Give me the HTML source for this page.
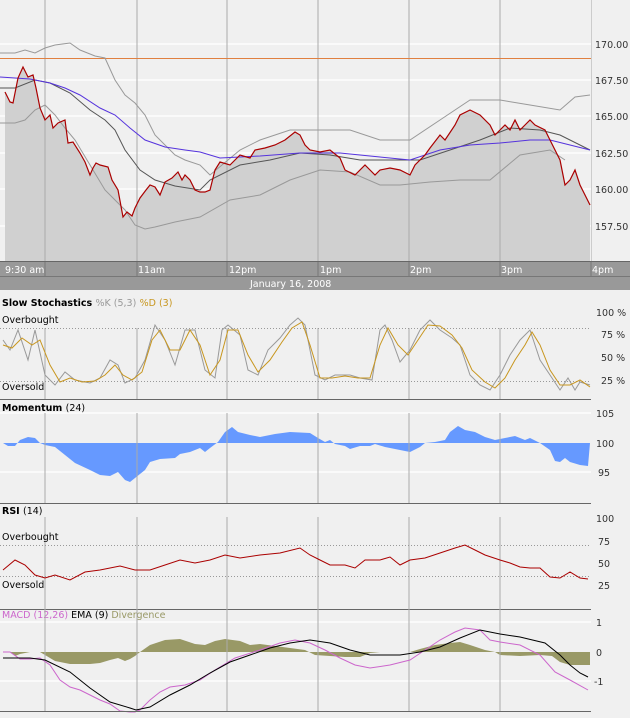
<!DOCTYPE html>
<html><head><style>
body{margin:0;background:#f0f0f0;width:630px;height:718px;overflow:hidden}
svg{display:block}
text{font-family:"DejaVu Sans","Liberation Sans",sans-serif;font-size:9.5px}
</style></head><body>
<svg width="630" height="718" viewBox="0 0 630 718">
<rect x="0" y="0" width="630" height="718" fill="#f0f0f0"/>
<g stroke="#fff" stroke-width="1.2">
<line x1="0" y1="44" x2="591" y2="44"/><line x1="0" y1="80" x2="591" y2="80"/><line x1="0" y1="116" x2="591" y2="116"/><line x1="0" y1="153" x2="591" y2="153"/><line x1="0" y1="189" x2="591" y2="189"/><line x1="0" y1="226" x2="591" y2="226"/>
</g>
<polygon fill="#d0d0d0" points="5,261 5,92 10,102 13,103 18,78 23,67 28,77 33,75 36,88 40,108 45,120 50,115 53,128 58,123 65,120 68,143 73,142 80,153 85,162 90,175 93,168 96,163 100,165 108,167 112,180 118,190 123,217 127,212 132,216 135,208 140,198 146,190 150,185 155,187 160,195 165,182 172,178 178,172 182,180 185,175 190,180 195,190 200,192 205,192 210,190 215,170 220,162 230,165 240,155 250,158 255,150 265,148 275,145 285,140 295,132 300,135 305,145 310,150 320,152 330,150 340,158 345,170 355,175 365,165 370,170 375,175 380,170 390,168 400,170 410,175 415,165 425,155 430,148 440,135 445,140 455,125 460,115 470,110 480,115 490,125 495,135 500,130 505,125 510,130 515,120 520,130 525,125 530,120 535,125 545,130 550,140 555,150 560,160 565,185 570,180 575,170 580,185 585,195 590,205 590,261"/>
<g stroke="#aaa" stroke-width="1">
<line x1="45" y1="0" x2="45" y2="261"/><line x1="137" y1="0" x2="137" y2="261"/><line x1="227" y1="0" x2="227" y2="261"/><line x1="318" y1="0" x2="318" y2="261"/><line x1="409" y1="0" x2="409" y2="261"/><line x1="500" y1="0" x2="500" y2="261"/><line x1="591.5" y1="0" x2="591.5" y2="261" stroke="#ccc"/>
</g>
<line x1="0" y1="58.5" x2="591" y2="58.5" stroke="#e08040" stroke-width="1"/>
<polyline fill="none" stroke="#999" points="0,53 15,53 25,50 35,53 45,48 55,45 70,43 80,50 95,56 105,58 115,80 125,95 135,103 145,115 155,135 165,145 175,155 185,160 200,165 210,175 240,150 260,140 290,130 320,130 350,130 380,140 410,140 440,120 470,100 500,100 530,105 560,110 575,97 590,95"/>
<polyline fill="none" stroke="#999" points="0,123 15,123 25,120 35,110 45,105 55,115 65,128 75,140 90,165 105,190 115,200 125,210 135,225 145,229 155,227 175,222 200,217 230,200 260,195 290,180 320,170 350,172 380,185 400,185 430,182 460,180 490,180 520,155 550,150 565,160"/>
<polyline fill="none" stroke="#555" points="0,88 15,88 35,80 50,83 70,93 90,110 105,120 115,130 125,150 140,170 155,180 175,186 200,190 210,180 240,165 270,160 300,153 330,155 360,160 390,160 420,160 450,150 480,140 510,128 540,130 560,135 590,150"/>
<polyline fill="none" stroke="#5533dd" points="0,77 30,79 50,83 65,88 80,95 100,108 115,115 130,128 145,140 165,147 185,150 200,152 220,158 260,156 300,153 340,153 380,157 410,160 440,150 470,145 500,143 530,140 550,140 570,145 590,150"/>
<polyline fill="none" stroke="#aa0000" stroke-width="1.2" points="5,92 10,102 13,103 18,78 23,67 28,77 33,75 36,88 40,108 45,120 50,115 53,128 58,123 65,120 68,143 73,142 80,153 85,162 90,175 93,168 96,163 100,165 108,167 112,180 118,190 123,217 127,212 132,216 135,208 140,198 146,190 150,185 155,187 160,195 165,182 172,178 178,172 182,180 185,175 190,180 195,190 200,192 205,192 210,190 215,170 220,162 230,165 240,155 250,158 255,150 265,148 275,145 285,140 295,132 300,135 305,145 310,150 320,152 330,150 340,158 345,170 355,175 365,165 370,170 375,175 380,170 390,168 400,170 410,175 415,165 425,155 430,148 440,135 445,140 455,125 460,115 470,110 480,115 490,125 495,135 500,130 505,125 510,130 515,120 520,130 525,125 530,120 535,125 545,130 550,140 555,150 560,160 565,185 570,180 575,170 580,185 585,195 590,205"/>
<g fill="#333"><text x="595" y="48">170.00</text><text x="595" y="84">167.50</text><text x="595" y="120">165.00</text><text x="595" y="157">162.50</text><text x="595" y="193">160.00</text><text x="595" y="230">157.50</text></g>
<!-- time bar -->
<rect x="0" y="261" width="630" height="29" fill="#999"/>
<line x1="0" y1="261.5" x2="630" y2="261.5" stroke="#666"/>
<line x1="0" y1="276.5" x2="630" y2="276.5" stroke="#777"/>
<g stroke="#777"><line x1="45" y1="262" x2="45" y2="276"/><line x1="137" y1="262" x2="137" y2="276"/><line x1="227" y1="262" x2="227" y2="276"/><line x1="318" y1="262" x2="318" y2="276"/><line x1="409" y1="262" x2="409" y2="276"/><line x1="500" y1="262" x2="500" y2="276"/><line x1="591" y1="262" x2="591" y2="276"/></g>
<g fill="#fff"><text x="5" y="273">9:30 am</text><text x="138" y="273">11am</text><text x="229" y="273">12pm</text><text x="320" y="273">1pm</text><text x="410" y="273">2pm</text><text x="501" y="273">3pm</text><text x="592" y="273">4pm</text><text x="250" y="287">January 16, 2008</text></g>
<!-- stochastics -->
<text x="2" y="306" font-weight="bold" fill="#000">Slow Stochastics <tspan font-weight="normal" fill="#999">%K (5,3)</tspan> <tspan font-weight="normal" fill="#c8961e">%D (3)</tspan></text>
<g stroke="#aaa"><line x1="45" y1="328" x2="45" y2="399"/><line x1="137" y1="328" x2="137" y2="399"/><line x1="227" y1="328" x2="227" y2="399"/><line x1="318" y1="328" x2="318" y2="399"/><line x1="409" y1="328" x2="409" y2="399"/><line x1="500" y1="328" x2="500" y2="399"/></g>
<g stroke="#999" stroke-dasharray="1,2"><line x1="0" y1="328.5" x2="591" y2="328.5"/><line x1="0" y1="381.5" x2="591" y2="381.5"/></g>
<text x="2" y="323" fill="#000">Overbought</text><text x="2" y="390" fill="#000">Oversold</text>
<polyline fill="none" stroke="#999" points="3,340 10,350 18,330 28,360 35,330 45,375 55,385 65,372 75,380 90,383 100,378 110,360 118,365 125,383 135,378 145,360 155,325 165,340 175,365 185,330 195,330 205,370 215,378 222,330 228,325 240,335 248,370 258,375 268,350 280,338 290,325 298,318 305,325 315,375 325,380 335,375 350,375 360,378 372,380 380,330 385,325 392,340 400,362 410,350 420,330 430,320 440,330 452,338 460,345 470,375 480,385 490,390 500,375 510,355 520,340 530,330 540,360 550,375 560,390 568,378 575,390 580,382 590,385"/>
<polyline fill="none" stroke="#c8961e" points="3,345 12,348 22,338 32,345 40,340 50,365 60,382 70,378 82,382 95,381 105,375 115,365 123,375 132,380 142,372 152,340 160,330 170,350 180,350 190,330 200,345 210,375 220,360 228,330 238,330 248,355 258,372 270,360 282,342 292,328 302,322 310,345 320,378 332,378 345,376 358,378 370,378 380,345 388,328 398,345 408,355 418,340 428,325 440,326 452,335 462,348 472,370 485,382 495,388 505,378 515,360 525,345 532,332 540,345 550,370 560,385 570,385 580,380 590,387"/>
<g fill="#333"><text x="596" y="316">100 %</text><text x="601" y="338">75 %</text><text x="601" y="361">50 %</text><text x="601" y="384">25 %</text></g>
<line x1="0" y1="399.5" x2="591" y2="399.5" stroke="#666"/>
<!-- momentum -->
<text x="2" y="411" font-weight="bold" fill="#000">Momentum <tspan font-weight="normal">(24)</tspan></text>
<g stroke="#fff" stroke-width="1.2"><line x1="0" y1="413" x2="591" y2="413"/><line x1="0" y1="472" x2="591" y2="472"/></g>
<polygon fill="#6699ff" points="3,443 8,446 15,446 20,440 28,437 35,438 40,443 45,445 55,447 65,455 75,463 90,470 100,475 110,476 118,472 125,480 130,482 135,478 145,470 150,462 160,459 175,458 180,454 190,452 200,448 205,452 210,448 218,442 225,432 232,427 238,432 250,435 260,437 275,434 290,432 310,433 318,438 325,442 330,440 335,444 345,446 350,449 360,446 370,446 375,444 385,447 400,450 410,452 420,447 425,443 435,442 445,440 450,432 458,426 465,430 475,432 485,437 495,440 505,438 515,436 525,440 530,438 540,443 550,450 555,461 560,462 565,458 570,462 580,465 588,466 590,443"/>
<g stroke="#aaa"><line x1="45" y1="413" x2="45" y2="503"/><line x1="137" y1="413" x2="137" y2="503"/><line x1="227" y1="413" x2="227" y2="503"/><line x1="318" y1="413" x2="318" y2="503"/><line x1="409" y1="413" x2="409" y2="503"/><line x1="500" y1="413" x2="500" y2="503"/></g>
<g fill="#333"><text x="596" y="417">105</text><text x="596" y="447">100</text><text x="598" y="476">95</text></g>
<line x1="0" y1="503.5" x2="591" y2="503.5" stroke="#666"/>
<!-- RSI -->
<text x="2" y="514" font-weight="bold" fill="#000">RSI <tspan font-weight="normal">(14)</tspan></text>
<g stroke="#aaa"><line x1="45" y1="517" x2="45" y2="609"/><line x1="137" y1="517" x2="137" y2="609"/><line x1="227" y1="517" x2="227" y2="609"/><line x1="318" y1="517" x2="318" y2="609"/><line x1="409" y1="517" x2="409" y2="609"/><line x1="500" y1="517" x2="500" y2="609"/></g>
<g stroke="#999" stroke-dasharray="1,2"><line x1="0" y1="545.5" x2="591" y2="545.5"/><line x1="0" y1="576.5" x2="591" y2="576.5"/></g>
<text x="2" y="540" fill="#000">Overbought</text><text x="2" y="588" fill="#000">Oversold</text>
<polyline fill="none" stroke="#aa0000" points="3,570 15,560 25,565 35,575 45,578 55,575 70,580 85,572 100,570 120,566 135,570 150,570 165,565 180,560 195,563 210,560 225,555 240,558 260,555 280,553 300,548 310,555 320,560 330,565 345,565 355,568 365,560 380,560 390,557 400,565 410,560 425,558 440,553 455,548 465,545 475,550 485,555 500,560 510,563 520,567 530,568 540,568 550,577 560,578 570,572 580,578 588,579"/>
<g fill="#333"><text x="596" y="522">100</text><text x="598" y="545">75</text><text x="598" y="567">50</text><text x="598" y="589">25</text></g>
<line x1="0" y1="609.5" x2="591" y2="609.5" stroke="#666"/>
<!-- MACD -->
<text x="2" y="618" fill="#cc66cc">MACD (12,26) <tspan fill="#000">EMA (9)</tspan> <tspan fill="#999966">Divergence</tspan></text>
<g stroke="#fff" stroke-width="1.2"><line x1="0" y1="622" x2="591" y2="622"/><line x1="0" y1="681" x2="591" y2="681"/></g>
<polygon fill="#999966" points="3,652 10,652 15,656 20,654 30,652 40,652 45,655 55,661 70,664 90,664 100,663 110,660 118,658 125,661 130,659 135,656 140,652 150,645 165,640 180,639 195,644 205,645 215,641 225,639 240,641 250,645 260,644 275,646 290,648 305,650 315,655 330,656 345,657 360,657 370,653 380,652 410,652 420,649 435,645 450,643 460,642 470,645 485,650 495,652 500,655 520,656 540,655 552,656 560,662 570,665 590,665 590,652"/>
<g stroke="#aaa"><line x1="45" y1="590" x2="45" y2="711"/><line x1="137" y1="590" x2="137" y2="711"/><line x1="227" y1="590" x2="227" y2="711"/><line x1="318" y1="590" x2="318" y2="711"/><line x1="409" y1="590" x2="409" y2="711"/><line x1="500" y1="590" x2="500" y2="711"/></g>
<polyline fill="none" stroke="#cc66cc" points="3,652 10,652 20,659 30,659 40,658 50,665 60,680 70,687 80,690 90,695 100,700 110,704 120,711 130,712 135,712 140,710 150,700 160,692 170,687 185,685 200,680 215,670 235,658 260,650 280,643 295,640 310,643 325,650 340,658 355,665 370,668 390,665 410,660 425,650 440,640 455,632 465,628 480,630 490,640 500,642 520,645 540,655 555,672 570,680 588,690"/>
<polyline fill="none" stroke="#000" points="3,658 30,658 45,660 70,672 90,688 110,702 130,708 136,710 150,707 170,695 190,685 210,673 230,662 250,655 270,648 290,643 310,640 330,643 350,650 370,655 400,655 420,652 440,647 460,638 480,630 500,634 520,637 545,643 560,655 570,665 580,673 588,677"/>
<g fill="#333"><text x="596" y="626">1</text><text x="596" y="656">0</text><text x="594" y="685">-1</text></g>
<line x1="0" y1="711.5" x2="591" y2="711.5" stroke="#666"/>
</svg>
</body></html>
